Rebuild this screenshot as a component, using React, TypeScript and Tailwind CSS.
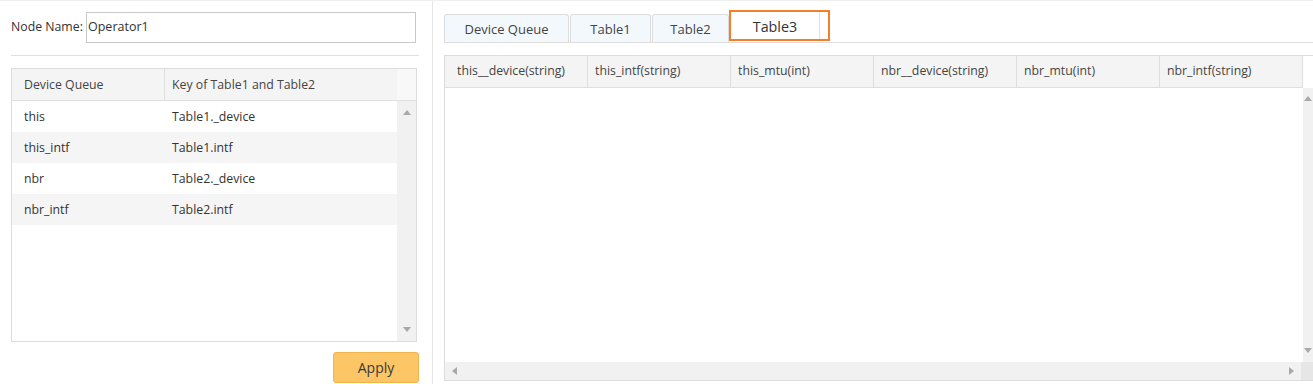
import React from "react";

const Up = () => (
  <svg width="8" height="5" viewBox="0 0 8 5"><path d="M0 5 L4 0 L8 5 Z" fill="#a8a8a8" /></svg>
);
const Down = () => (
  <svg width="8" height="5" viewBox="0 0 8 5"><path d="M0 0 L4 5 L8 0 Z" fill="#a8a8a8" /></svg>
);
const Left = () => (
  <svg width="5" height="8" viewBox="0 0 5 8"><path d="M5 0 L0 4 L5 8 Z" fill="#a8a8a8" /></svg>
);
const Right = () => (
  <svg width="5" height="8" viewBox="0 0 5 8"><path d="M0 0 L5 4 L0 8 Z" fill="#a8a8a8" /></svg>
);

const leftRows = [
  ["this", "Table1._device"],
  ["this_intf", "Table1.intf"],
  ["nbr", "Table2._device"],
  ["nbr_intf", "Table2.intf"],
];

const cols = [
  "this__device(string)",
  "this_intf(string)",
  "this_mtu(int)",
  "nbr__device(string)",
  "nbr_mtu(int)",
  "nbr_intf(string)",
];

export default function App() {
  return (
    <div className="flex h-[384px] w-[1313px] overflow-hidden border-t border-[#efefef] bg-white font-['Open_Sans',sans-serif] text-[12.3px] text-[#333]">
      {/* Left panel */}
      <div className="flex w-[433px] shrink-0 flex-col border-r border-[#e6e6e6] pl-[11px] pr-[13px] pt-[11px]">
        <div className="flex h-[31px] items-center">
          <span className="w-[75px] shrink-0 text-[#333]">Node Name:</span>
          <div className="flex h-[31px] w-[330px] items-center border border-[#c9c9c9] pl-[1px] text-[12.5px] text-[#333]">
            Operator1
          </div>
        </div>
        <div className="mt-[12px] h-px bg-[#e0e0e0]" />
        <div className="mt-[12px] flex h-[274px] w-[406px] flex-col border border-[#dcdcdc]">
          <div className="flex h-[32px] shrink-0 border-b border-[#e0e0e0]">
            <div className="flex w-[153px] items-center border-r border-[#e0e0e0] bg-[#f4f4f4] pl-[12px] pt-[2px] text-[#444]">
              Device Queue
            </div>
            <div className="flex flex-1 items-center bg-[#f4f4f4] pl-[7px] pt-[2px] text-[#444]">
              Key of Table1 and Table2
            </div>
            <div className="w-[19px] bg-[#f8f8f8]" />
          </div>
          <div className="flex flex-1">
            <div className="flex-1">
              {leftRows.map((r, i) => (
                <div
                  key={r[0]}
                  className={`flex h-[31px] items-center pt-[2px] ${i % 2 === 1 ? "bg-[#f5f5f5]" : "bg-white"}`}
                >
                  <div className="w-[153px] pl-[12px]">{r[0]}</div>
                  <div className="pl-[7px]">{r[1]}</div>
                </div>
              ))}
            </div>
            <div className="flex w-[19px] flex-col items-center justify-between bg-[#f1f1f1] pb-[9px] pt-[9px]">
              <Up />
              <Down />
            </div>
          </div>
        </div>
        <div className="mt-[10px] flex justify-end">
          <button className="flex h-[31px] w-[86px] items-center justify-center rounded-[3px] border border-[#f0b44c] bg-[#fcc565] text-[14px] text-[#3a3a3a]">
            Apply
          </button>
        </div>
      </div>

      {/* Right panel */}
      <div className="flex flex-1 flex-col pl-[11px] pt-[10px]">
        <div className="flex h-[32px] items-end border-b border-[#dedede]">
          <div className="flex h-[28px] w-[125px] items-center justify-center rounded-t-[3px] border border-b-0 border-[#dcdcdc] bg-[#f3f8fd] pt-[3px] text-[13px] text-[#444]">
            Device Queue
          </div>
          <div className="ml-px flex h-[28px] w-[81px] items-center justify-center rounded-t-[3px] border border-b-0 border-[#dcdcdc] bg-[#f3f8fd] pt-[3px] text-[13px] text-[#444]">
            Table1
          </div>
          <div className="ml-px flex h-[28px] w-[77px] items-center justify-center rounded-t-[3px] border border-b-0 border-[#dcdcdc] bg-[#f3f8fd] pt-[3px] text-[13px] text-[#444]">
            Table2
          </div>
          <div className="mb-px flex h-[31px] w-[101px] border-2 border-[#f47f2a] bg-white">
            <div className="flex w-[89px] items-center justify-center border-r border-[#e0e0e0] pt-[2px] text-[14.3px] text-[#333]">
              Table3
            </div>
          </div>
        </div>
        <div className="mt-[12px] flex h-[326px] w-[869px] flex-col border-b border-l border-t border-[#dcdcdc]">
          <div className="flex flex-1">
            <div className="flex flex-1 flex-col">
              <div className="flex h-[32px] shrink-0 border-b border-[#dedede] bg-[#f4f4f4]">
                {cols.map((c, i) => (
                  <div
                    key={c}
                    className={`flex w-[143px] shrink-0 items-center border-r border-[#dedede] text-[#444] ${i === 0 ? "pl-[12px]" : "pl-[7px]"}`}
                  >
                    {c}
                  </div>
                ))}
              </div>
              <div className="flex-1 bg-white" />
            </div>
            <div className="flex w-[12px] flex-col">
              <div className="h-[32px] bg-white" />
              <div className="flex flex-1 flex-col items-center justify-between bg-[#f1f1f1] pb-[9px] pt-[8px]">
                <Up />
                <Down />
              </div>
            </div>
          </div>
          <div className="flex h-[18px] shrink-0">
            <div className="flex flex-1 items-center justify-between bg-[#f1f1f1] pl-[7px] pr-[7px]">
              <Left />
              <Right />
            </div>
            <div className="w-[12px] bg-[#e6e6e6]" />
          </div>
        </div>
      </div>
    </div>
  );
}
